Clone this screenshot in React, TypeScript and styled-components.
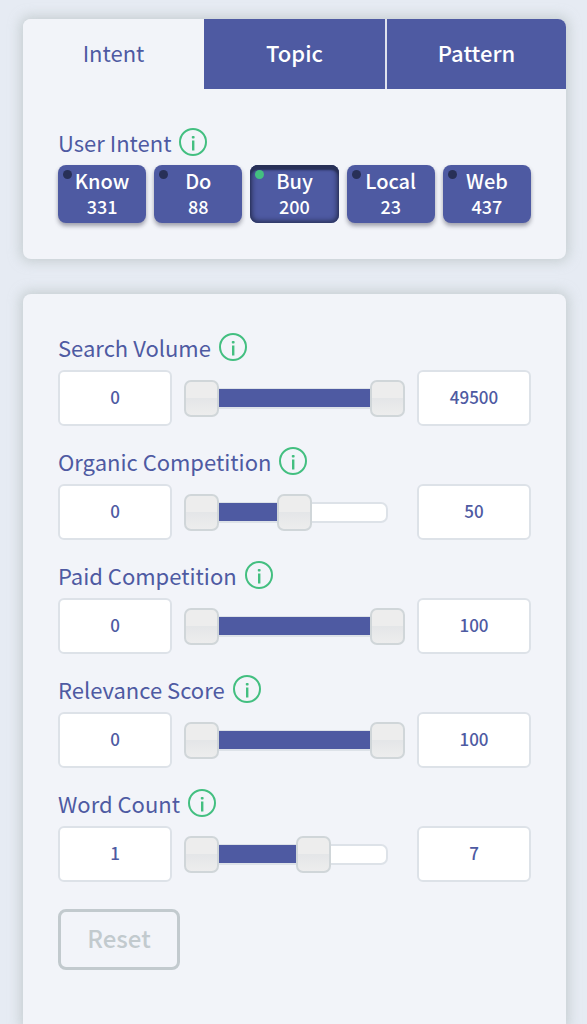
import React, { useState } from "react";
import styled, { createGlobalStyle, css } from "styled-components";

const indigo = "#4e5aa2";
const night = "#283057";
const green = "#43bf80";
const panel = "#f2f4f9";
const line = "#dde2e8";
const THUMB = 35;

const GlobalStyle = createGlobalStyle`
  *, *::before, *::after { box-sizing: border-box; }
  body {
    margin: 0;
    background: #e6ebf3;
    color: ${indigo};
    font-family: "Noto Sans CJK SC", "Open Sans", sans-serif;
  }
  button, input { font-family: inherit; color: inherit; margin: 0; }
`;

const Page = styled.main`
  display: flex;
  flex-direction: column;
  gap: 35px;
  min-height: 100vh;
  padding: 19px 21px 0 23px;
`;

const Card = styled.section<{ $fill?: boolean }>`
  background: ${panel};
  border-radius: 8px;
  box-shadow: 0 0 12px 3px rgba(178, 188, 188, 0.6);
  ${(p) =>
    p.$fill &&
    css`
      flex: 1;
      border-radius: 8px 8px 0 0;
    `}
`;

const Tabs = styled.div`
  display: grid;
  grid-template-columns: repeat(3, 1fr);
  overflow: hidden;
  border-radius: 8px 8px 0 0;
`;

const Tab = styled.button<{ $active: boolean }>`
  height: 70px;
  padding: 0 0 5px;
  border: 0;
  background: ${(p) => (p.$active ? panel : indigo)};
  color: ${(p) => (p.$active ? indigo : "#fff")};
  font-size: 22px;
  font-weight: ${(p) => (p.$active ? 400 : 500)};
  line-height: 32px;
  cursor: pointer;

  & + & {
    border-left: 2px solid ${(p) => (p.$active ? panel : "#dfe2ee")};
  }
  &:nth-child(2) {
    border-left: 0;
  }
`;

const IntentBody = styled.div`
  padding: 39px 35px 36px;
`;

const Heading = styled.div`
  display: flex;
  align-items: center;
  gap: 8px;
  height: 28px;
  margin-bottom: 9px;
  font-size: 22px;
  line-height: 28px;
`;

const InfoButton = styled.button`
  display: flex;
  padding: 0;
  border: 0;
  background: none;
  cursor: pointer;
`;

const IntentGrid = styled.div`
  display: grid;
  grid-template-columns: repeat(5, 1fr);
  gap: 8px;
`;

const IntentButton = styled.button<{ $active: boolean }>`
  position: relative;
  display: flex;
  flex-direction: column;
  align-items: center;
  height: 58px;
  padding: 3px 0 0;
  border: 0;
  border-radius: 8px;
  background: ${indigo};
  color: #fff;
  font-weight: 500;
  cursor: pointer;
  box-shadow: ${(p) =>
    p.$active
      ? `inset 0 5px 2px ${night}, inset 0 0 5px 2px ${night}`
      : "0 3px 4px rgba(60, 60, 80, 0.45)"};

  &::before {
    content: "";
    position: absolute;
    top: 5px;
    left: 5px;
    width: 9px;
    height: 9px;
    border-radius: 50%;
    background: ${(p) => (p.$active ? green : night)};
  }
`;

const IntentName = styled.span`
  font-size: 20px;
  line-height: 26px;
`;

const IntentCount = styled.span`
  font-size: 18px;
  line-height: 24px;
`;

const Filters = styled.form`
  display: flex;
  flex-direction: column;
  gap: 21px;
  padding: 39px 35px 55px;
`;

const FilterRow = styled.div`
  display: grid;
  grid-template-columns: 114px 1fr 114px;
  align-items: center;
  gap: 12px;
`;

const ValueBox = styled.input`
  width: 100%;
  height: 56px;
  padding: 0 0 3px;
  border: 2px solid ${line};
  border-radius: 6px;
  background: #fff;
  font-size: 17px;
  font-weight: 500;
  line-height: 24px;
  text-align: center;
`;

const Slider = styled.div`
  position: relative;
  display: grid;
  align-items: center;
  height: 38px;
`;

const Rail = styled.div`
  grid-area: 1 / 1;
  height: 21px;
  margin-right: 17px;
  border: 2px solid ${line};
  border-radius: 7px;
  background: #fff;
`;

const RailFill = styled.div`
  position: absolute;
  top: 10px;
  height: 18px;
  background: ${indigo};
`;

const thumb = css`
  width: ${THUMB}px;
  height: 37px;
  border: 2px solid #d0d6d9;
  border-radius: 7px;
  background: linear-gradient(#ededed 48%, #e4e6e8 50%, #ededed);
  pointer-events: auto;
  cursor: pointer;
`;

const Range = styled.input`
  position: relative;
  grid-area: 1 / 1;
  width: 100%;
  height: 37px;
  appearance: none;
  background: none;
  pointer-events: none;

  &::-webkit-slider-thumb {
    appearance: none;
    ${thumb}
  }
  &::-moz-range-thumb {
    ${thumb}
  }
`;

const ResetButton = styled.button`
  align-self: flex-start;
  width: 122px;
  height: 61px;
  margin-top: 6px;
  padding: 0 0 3px;
  border: 3px solid #c2cace;
  border-radius: 8px;
  background: none;
  color: #c2cace;
  font-size: 24px;
  font-weight: 500;
  line-height: 36px;
  cursor: pointer;
`;

function Info({ topic }: { topic: string }) {
  return (
    <InfoButton type="button" aria-label={`About ${topic}`}>
      <svg width="28" height="28" viewBox="0 0 28 28" fill="none">
        <circle cx="14" cy="14" r="13" stroke={green} strokeWidth="2" />
        <rect x="13" y="12.5" width="2.4" height="10" fill={green} />
        <rect x="12.8" y="8" width="2.8" height="2.6" rx="0.8" fill={green} />
      </svg>
    </InfoButton>
  );
}

interface FilterDef {
  label: string;
  min: number;
  max: number;
  value: [number, number];
}

const filterDefs: FilterDef[] = [
  { label: "Search Volume", min: 0, max: 49500, value: [0, 49500] },
  { label: "Organic Competition", min: 0, max: 100, value: [0, 50] },
  { label: "Paid Competition", min: 0, max: 100, value: [0, 100] },
  { label: "Relevance Score", min: 0, max: 100, value: [0, 100] },
  { label: "Word Count", min: 1, max: 11, value: [1, 7] },
];

const intents = [
  { name: "Know", count: 331 },
  { name: "Do", count: 88 },
  { name: "Buy", count: 200 },
  { name: "Local", count: 23 },
  { name: "Web", count: 437 },
];

interface FilterProps {
  def: FilterDef;
  value: [number, number];
  onChange: (value: [number, number]) => void;
}

function Filter({ def, value, onChange }: FilterProps) {
  const [low, high] = value;
  const share = (n: number) => (n - def.min) / (def.max - def.min);
  const at = (n: number) => `calc((100% - ${THUMB}px) * ${n} + ${THUMB / 2}px)`;
  const setLow = (n: number) =>
    onChange([Math.max(def.min, Math.min(n || 0, high)), high]);
  const setHigh = (n: number) =>
    onChange([low, Math.min(def.max, Math.max(n || 0, low))]);

  return (
    <div role="group" aria-label={def.label}>
      <Heading>
        <span>{def.label}</span>
        <Info topic={def.label} />
      </Heading>
      <FilterRow>
        <ValueBox
          aria-label={`${def.label} from`}
          inputMode="numeric"
          value={low}
          onChange={(e) => setLow(Number(e.target.value))}
        />
        <Slider>
          <Rail />
          <RailFill
            style={{ left: at(share(low)), right: at(1 - share(high)) }}
          />
          <Range
            type="range"
            aria-label={`${def.label} minimum`}
            min={def.min}
            max={def.max}
            value={low}
            onChange={(e) => setLow(Number(e.target.value))}
          />
          <Range
            type="range"
            aria-label={`${def.label} maximum`}
            min={def.min}
            max={def.max}
            value={high}
            onChange={(e) => setHigh(Number(e.target.value))}
          />
        </Slider>
        <ValueBox
          aria-label={`${def.label} to`}
          inputMode="numeric"
          value={high}
          onChange={(e) => setHigh(Number(e.target.value))}
        />
      </FilterRow>
    </div>
  );
}

export default function App() {
  const [tab, setTab] = useState("Intent");
  const [intent, setIntent] = useState("Buy");
  const [values, setValues] = useState(filterDefs.map((d) => d.value));

  return (
    <>
      <GlobalStyle />
      <Page>
        <Card>
          <Tabs role="tablist">
            {["Intent", "Topic", "Pattern"].map((name) => (
              <Tab
                key={name}
                type="button"
                role="tab"
                aria-selected={tab === name}
                $active={tab === name}
                onClick={() => setTab(name)}
              >
                {name}
              </Tab>
            ))}
          </Tabs>
          <IntentBody>
            <Heading>
              <span>User Intent</span>
              <Info topic="User Intent" />
            </Heading>
            <IntentGrid>
              {intents.map(({ name, count }) => (
                <IntentButton
                  key={name}
                  type="button"
                  aria-pressed={intent === name}
                  $active={intent === name}
                  onClick={() => setIntent(name)}
                >
                  <IntentName>{name}</IntentName>
                  <IntentCount>{count}</IntentCount>
                </IntentButton>
              ))}
            </IntentGrid>
          </IntentBody>
        </Card>
        <Card $fill>
          <Filters onSubmit={(e) => e.preventDefault()}>
            {filterDefs.map((def, i) => (
              <Filter
                key={def.label}
                def={def}
                value={values[i]}
                onChange={(next) =>
                  setValues(values.map((v, j) => (j === i ? next : v)))
                }
              />
            ))}
            <ResetButton
              type="button"
              onClick={() => setValues(filterDefs.map((d) => d.value))}
            >
              Reset
            </ResetButton>
          </Filters>
        </Card>
      </Page>
    </>
  );
}
